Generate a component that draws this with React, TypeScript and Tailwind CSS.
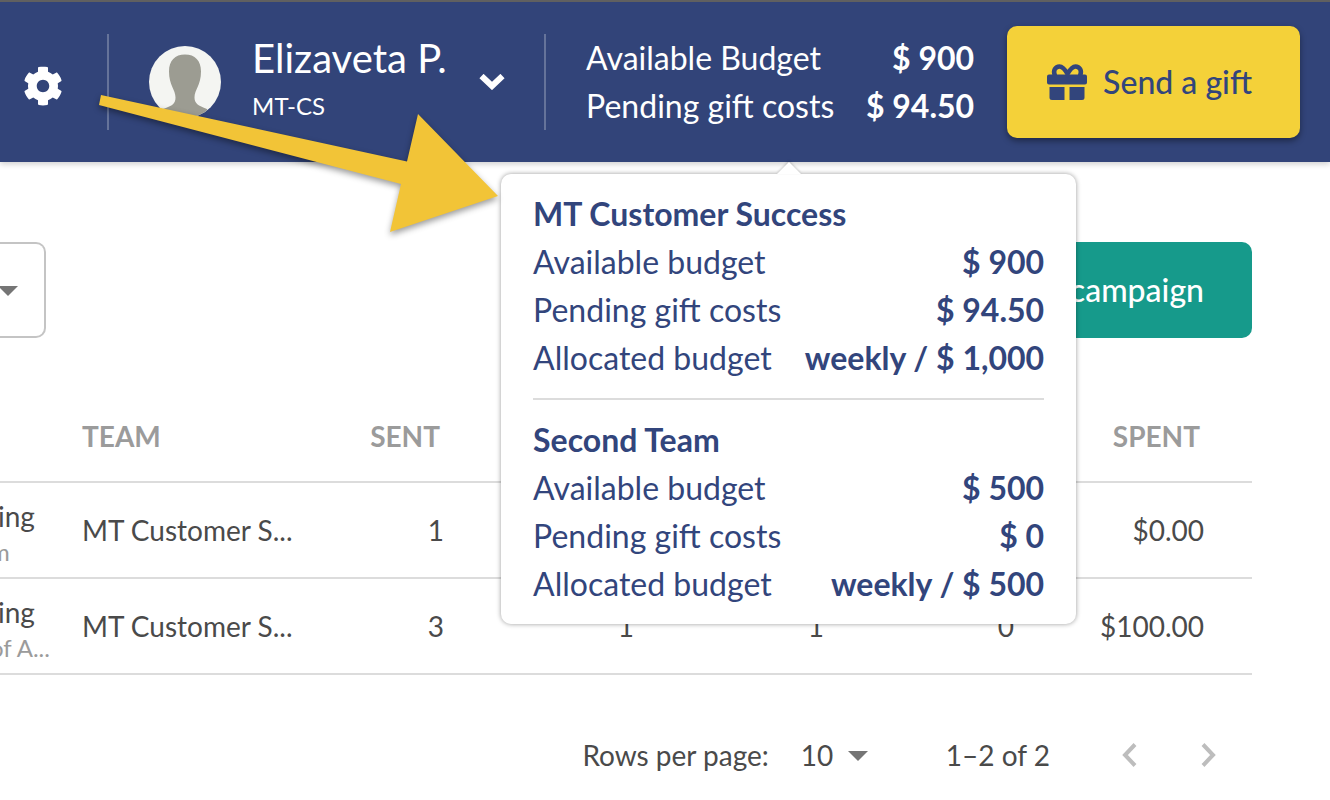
import { FaCog } from "react-icons/fa";

const teams = [
  {
    name: "MT Customer Success",
    rows: [
      { label: "Available budget", value: "$ 900" },
      { label: "Pending gift costs", value: "$ 94.50" },
      { label: "Allocated budget", value: "weekly / $ 1,000" },
    ],
  },
  {
    name: "Second Team",
    rows: [
      { label: "Available budget", value: "$ 500" },
      { label: "Pending gift costs", value: "$ 0" },
      { label: "Allocated budget", value: "weekly / $ 500" },
    ],
  },
];

const campaigns = [
  { title: "ing", subtitle: "m", team: "MT Customer S...", counts: ["1", "", "", ""], spent: "$0.00" },
  { title: "ing", subtitle: "of A...", team: "MT Customer S...", counts: ["3", "1", "1", "0"], spent: "$100.00" },
];

const Caret = ({ className }: { className: string }) => (
  <svg viewBox="0 0 20 10" className={`pointer-events-none h-[10px] w-5 fill-[#757575] ${className}`}>
    <path d="M0 0h20L10 10z" />
  </svg>
);

const GiftIcon = () => (
  <svg viewBox="0 0 40 36" className="h-9 w-10 shrink-0" fill="currentColor">
    <path d="M2 10.500h36a2 2 0 0 1 2 2v6a2 2 0 0 1-2 2H2a2 2 0 0 1-2-2v-6a2 2 0 0 1 2-2z" />
    <path d="M2.500 23h15v13H5a2.500 2.500 0 0 1-2.500-2.500zM22.500 23h15v10.500A2.500 2.500 0 0 1 35 36H22.500z" />
    <path
      d="M8 12C5.500 6.500 8.500 2.500 12.500 2.500c3.500 0 5.500 3 8 7.500 2.500-4.500 4.500-7.500 8-7.500 4 0 7 4 4.500 9.500"
      fill="none"
      stroke="currentColor"
      strokeWidth="4.500"
    />
  </svg>
);

const Avatar = () => (
  <svg viewBox="0 0 72 72" className="size-[72px] shrink-0 rounded-full bg-[#f4f5f2]">
    <path
      d="M36 8.500c-10 0-16 6-16 17 0 14 6.500 18 6.500 26 0 6-2.500 8-12.500 11.500V72h44v-9c-9-3.500-12.500-5.500-12.500-11.500 0-8 6.500-12 6.500-26 0-11-6-17-16-17z"
      fill="#9c9c92"
    />
  </svg>
);

const BudgetPopover = () => (
  <div className="absolute top-[140px] -right-[102px] z-20 w-[575px] rounded-[10px] bg-white px-8 py-4 text-[#32457c] shadow-[0_0_5px_rgba(0,0,0,0.4)]">
    <svg viewBox="0 0 24 12" className="absolute -top-3 left-1/2 h-3 w-6 -translate-x-1/2 fill-white drop-shadow-[0_-1px_1px_rgba(0,0,0,0.2)]">
      <path d="M0 12 12 0l12 12z" />
    </svg>
    {teams.map((team, index) => (
      <section key={team.name} className={index > 0 ? "mt-4 border-t-2 border-[#dcdcdc] pt-4" : ""}>
        <h2 className="font-bold">{team.name}</h2>
        <dl>
          {team.rows.map((row) => (
            <div key={row.label} className="flex justify-between">
              <dt>{row.label}</dt>
              <dd className="font-bold">{row.value}</dd>
            </div>
          ))}
        </dl>
      </section>
    ))}
  </div>
);

const Header = () => (
  <header className="relative z-10 flex h-[162px] items-center justify-end border-t-2 border-[#606060] bg-[#324479] pr-[30px] text-white shadow-[0_2px_6px_rgba(0,0,0,0.2)]">
    <button aria-label="Settings" className="mr-11 pt-2">
      <FaCog className="size-10" />
    </button>
    <div className="flex h-24 w-[439px] items-center border-x-2 border-white/25 pl-10">
      <Avatar />
      <div className="ml-[31px]">
        <div className="text-[40px] leading-12">Elizaveta P.</div>
        <div className="text-2xl leading-12">MT-CS</div>
      </div>
      <button aria-label="Open account menu" className="ml-8">
        <svg viewBox="0 0 26 16" className="h-4 w-[26px]" fill="none" stroke="currentColor" strokeWidth="6" strokeLinejoin="miter">
          <path d="M2.500 2 13 12 23.500 2" />
        </svg>
      </button>
    </div>
    <div className="relative ml-10 w-[388px] text-[32px] leading-12">
      <div className="flex justify-between">
        <span>Available Budget</span>
        <span className="font-bold">$ 900</span>
      </div>
      <div className="flex justify-between">
        <span>Pending gift costs</span>
        <span className="font-bold">$ 94.50</span>
      </div>
      <BudgetPopover />
    </div>
    <button className="ml-[33px] flex h-28 items-center gap-4 rounded-[10px] bg-[#f4d139] pr-12 pl-10 text-[32px] font-medium text-[#32457c] shadow-[0_3px_6px_rgba(0,0,0,0.4)]">
      <GiftIcon />
      Send a gift
    </button>
  </header>
);

/* Pointer from the account area to the budget popover */
const PointerArrow = () => (
  <svg
    viewBox="0 0 400 120"
    className="pointer-events-none absolute top-[113px] left-[99px] z-30 h-[120px] w-[400px] overflow-visible drop-shadow-[0_3px_3px_rgba(0,0,0,0.4)]"
  >
    <path d="M2-18 308 48.500 319 1l80 82-108 36 11-48L0-8z" fill="#f2c437" />
  </svg>
);

const App = () => {
  return (
    <div className="relative min-h-screen overflow-hidden bg-white font-['Lato',sans-serif] text-[#4a4a4a]">
      <Header />
      <PointerArrow />

      <main className="pt-20 pr-[78px]">
        <div className="flex h-24 items-stretch justify-between">
          <div className="relative w-[46px]">
            <select aria-label="Filter" className="h-full w-full appearance-none rounded-r-[10px] border-2 border-l-0 border-[#c4c4c4]" />
            <Caret className="absolute top-11 -left-0.5" />
          </div>
          <button className="w-[252px] rounded-[10px] bg-[#169a8b] pr-12 text-right text-[32px] font-medium text-white">campaign</button>
        </div>

        <table className="mt-[52px] w-full table-fixed text-right text-[28px] leading-8">
          <colgroup>
            <col className="w-[50px]" />
            <col />
            <col className="w-[190px]" />
            <col className="w-[190px]" />
            <col className="w-[190px]" />
            <col className="w-[190px]" />
            <col className="w-[190px]" />
          </colgroup>
          <thead>
            <tr className="h-[92px] border-b-2 border-[#dcdcdc] text-[#9b9b9b]">
              <th />
              <th className="pl-8 text-left">TEAM</th>
              <th className="pr-[52px]">SENT</th>
              <th />
              <th />
              <th />
              <th className="pr-[52px]">SPENT</th>
            </tr>
          </thead>
          <tbody>
            {campaigns.map((campaign) => (
              <tr key={campaign.subtitle} className="h-24 border-b-2 border-[#dcdcdc]">
                <td className="pt-1 text-left whitespace-nowrap">
                  <div className="-ml-0.5 leading-10">{campaign.title}</div>
                  <div className="-ml-2.5 text-2xl leading-8 text-[#9b9b9b]">{campaign.subtitle}</div>
                </td>
                <td className="pl-8 text-left whitespace-nowrap">{campaign.team}</td>
                {campaign.counts.map((count, index) => (
                  <td key={index} className="pr-12">{count}</td>
                ))}
                <td className="pr-12">{campaign.spent}</td>
              </tr>
            ))}
          </tbody>
        </table>

        <div className="mt-14 flex items-center justify-end pr-[35px] text-[28px] leading-12">
          <label htmlFor="rows-per-page">Rows per page:</label>
          <div className="relative ml-8">
            <select id="rows-per-page" className="w-[67px] appearance-none">
              <option>10</option>
            </select>
            <Caret className="absolute top-5 right-0" />
          </div>
          <span className="ml-[78px]">1–2 of 2</span>
          <button aria-label="Previous page" className="ml-[71px] text-[#bdbdbd]">
            <svg viewBox="0 0 16 24" className="h-6 w-4" fill="none" stroke="currentColor" strokeWidth="4">
              <path d="M14 1.500 4 12l10 10.500" />
            </svg>
          </button>
          <button aria-label="Next page" className="ml-16 text-[#bdbdbd]">
            <svg viewBox="0 0 16 24" className="h-6 w-4" fill="none" stroke="currentColor" strokeWidth="4">
              <path d="m2 1.500 10 10.500L2 22.500" />
            </svg>
          </button>
        </div>
      </main>
    </div>
  );
};

export default App;
